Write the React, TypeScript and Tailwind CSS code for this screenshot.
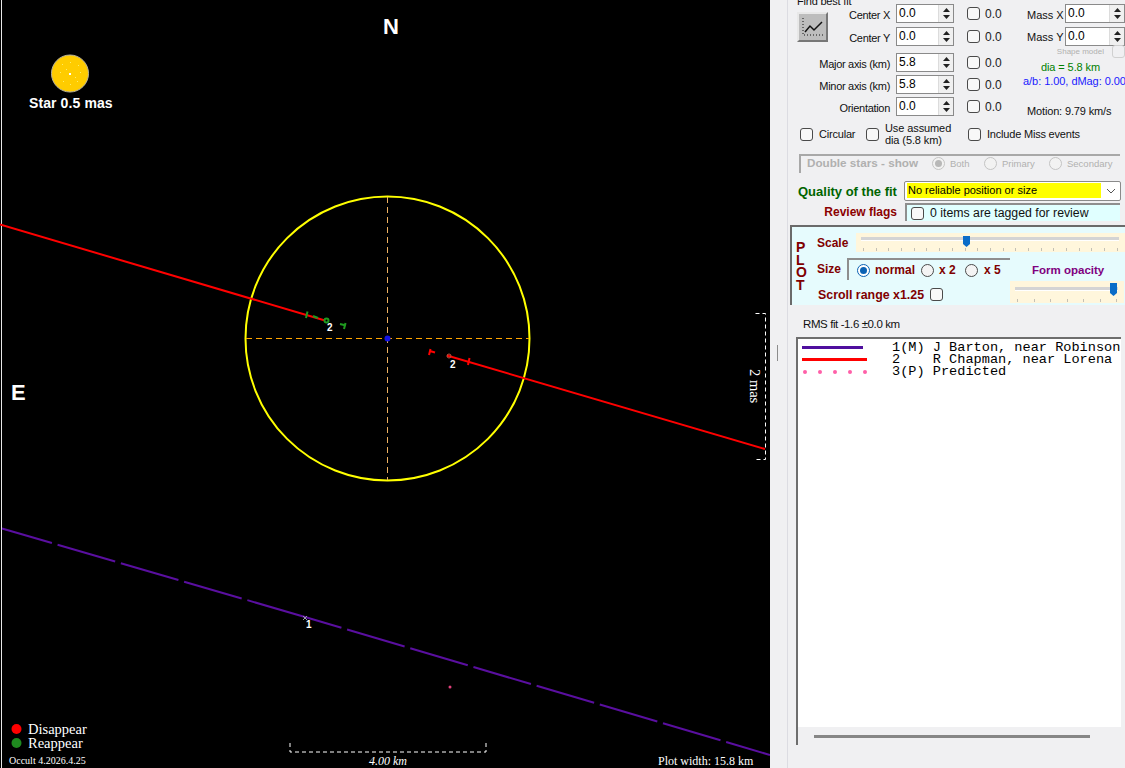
import React from 'react';

// small form controls used by the fit panel
const Check = ({ className = '' }: { className?: string }) => (
  <span className={`block w-[13px] h-[13px] shrink-0 rounded-[3px] border border-[#4a4a4a] bg-[#f8f8f8] ${className}`} />
);

const Spin = ({ value, className = 'w-[58px]' }: { value: string; className?: string }) => (
  <div className={`h-[19px] shrink-0 flex bg-white border border-[#8a8a8a] ${className}`}>
    <span className="flex-1 pl-[2px] text-[12px] leading-[16px] text-black">{value}</span>
    <span className="w-[15px] flex flex-col items-center justify-center gap-[3px] bg-[#f0f0f0] border-l border-[#dcdcdc]">
      <svg width="7" height="4" viewBox="0 0 7 4"><path d="M3.5 0 7 4H0z" fill="#222" /></svg>
      <svg width="7" height="4" viewBox="0 0 7 4"><path d="M0 0h7L3.5 4z" fill="#222" /></svg>
    </span>
  </div>
);

const FitRow = ({ label, value, className = '' }: { label: string; value: string; className?: string }) => (
  <div className={`flex items-center h-[19px] ${className}`}>
    <span className="flex-1 pr-[6px] pt-[3px] text-right whitespace-nowrap text-[11px] tracking-[-0.3px] text-[#111]">{label}</span>
    <Spin value={value} />
    <Check className="ml-[13px]" />
    <span className="ml-[5px] w-[38px] text-[12px] text-[#222]">0.0</span>
  </div>
);

const Radio = ({ on = false, disabled = false }: { on?: boolean; disabled?: boolean }) => (
  <span
    className={`flex items-center justify-center w-[13px] h-[13px] shrink-0 rounded-full border ${
      on && !disabled ? 'border-[#0a62b4] bg-white' : disabled ? 'border-[#c4c4c4] bg-[#f2f2f2]' : 'border-[#4a4a4a] bg-[#f4f4f4]'
    }`}
  >
    {on && <span className={`block w-[7px] h-[7px] rounded-full ${disabled ? 'bg-[#b8b8b8]' : 'bg-[#0a62b4]'}`} />}
  </span>
);

const Slider = ({ thumb, ticks, tall = false, className = '' }: { thumb: number; ticks: number; tall?: boolean; className?: string }) => (
  <div className={`relative bg-[#fff6dc] ${className}`}>
    <div className={`absolute left-[5px] right-[6px] h-[4px] bg-[#d4d4d4] border-b border-white ${tall ? 'top-[6px]' : 'top-[4px]'}`} />
    <svg className={`absolute ${tall ? 'top-[2px]' : 'top-[3px]'}`} style={{ left: thumb }} width="7" height={tall ? 13 : 11} viewBox={tall ? '0 0 7 13' : '0 0 7 11'}>
      <path d={tall ? 'M0 0h7v10l-3.500 3L0 10z' : 'M0 0h7v8l-3.500 3L0 8z'} fill="#0a6cc8" />
    </svg>
    <div className="absolute left-[7px] right-[7px] bottom-[1px] h-[3px] flex justify-between">
      {Array.from({ length: ticks }).map((_, i) => (
        <span key={i} className="block w-px h-[3px] bg-[#c4c0b4]" />
      ))}
    </div>
  </div>
);

const Plot = () => (
  <div className="w-[770px] h-[768px] shrink-0 bg-black">
    <svg width="770" height="768" viewBox="0 0 770 768" className="block">
      <rect x="1" y="0" width="1" height="768" fill="#e8e8e8" />

      {/* star */}
      <circle cx="70" cy="73.500" r="18.500" fill="#ffcc00" stroke="#b9b4a0" strokeWidth="1" />
      {[[62, 64], [70, 62], [78, 65], [60, 72], [80, 72], [63, 81], [70, 84], [77, 81], [66, 69], [75, 77]].map(([x, y]) => (
        <rect key={`${x}-${y}`} x={x} y={y} width="1" height="1" fill="#ffee66" />
      ))}
      <rect x="69" y="73" width="2" height="2" fill="#ffffff" />

      {/* asteroid outline */}
      <circle cx="387.500" cy="338.500" r="142" fill="none" stroke="#ffff00" strokeWidth="2" />
      <path d="M246 338.500H529" stroke="#ffa500" strokeWidth="1" strokeDasharray="6 4" />
      <path d="M387.500 197V480" stroke="#eeb060" strokeWidth="1" strokeDasharray="6 4" />
      <circle cx="387.500" cy="338.500" r="3" fill="#1414e6" />

      {/* chords */}
      <path d="M0 224.500 325 320.500M447 355.500 765 449" stroke="#ff0000" strokeWidth="2" fill="none" />
      <path d="M2 528.500 305 617" stroke="#5a0fa0" strokeWidth="2" strokeDasharray="60 5.900" strokeDashoffset="8" fill="none" />
      <path d="M305 617 770 755" stroke="#5a0fa0" strokeWidth="2" strokeDasharray="60 5.900" strokeDashoffset="22" fill="none" />

      {/* event markers */}
      <g stroke="#1f9a1f" strokeWidth="2" fill="none">
        <path d="M307.500 311.500 306 318" />
        <path d="M313 316l5 2" />
        <circle cx="326.500" cy="320.500" r="2" />
        <path d="M340 324l6 1.500M345.500 323 344 329" />
      </g>
      <g stroke="#ff0000" strokeWidth="2" fill="none">
        <path d="M430.500 349 429 355M430 351l5 1.500" />
        <path d="M469.500 358 468 365" />
      </g>
      <circle cx="449" cy="356" r="2" fill="none" stroke="#c8503c" strokeWidth="1" />
      <path d="M303 616l4 4M307 616l-4 4" stroke="#9a9aa8" strokeWidth="1" />
      <circle cx="450" cy="687" r="1.500" fill="#e0407a" />

      {/* scale and size brackets */}
      <path d="M290 743v9H486V743" fill="none" stroke="#fff" strokeWidth="1" strokeDasharray="4 3" />
      <path d="M755.500 313.500H765.500V459.500H755.500" fill="none" stroke="#fff" strokeWidth="1" strokeDasharray="4 3" />

      <circle cx="16.500" cy="729" r="5" fill="#ff0000" />
      <circle cx="16.500" cy="743" r="5" fill="#1f8a1f" />

      {/* labels */}
      <text x="383" y="34" className="fill-white font-['Liberation_Sans'] font-bold text-[22px]">N</text>
      <text x="11" y="400" className="fill-white font-['Liberation_Sans'] font-bold text-[22px]">E</text>
      <text x="29" y="108" className="fill-white font-['Liberation_Sans'] font-bold text-[14px] tracking-[0.1px]">Star 0.5 mas</text>
      <text x="327" y="331" className="fill-white font-['Liberation_Sans'] font-bold text-[10px]">2</text>
      <text x="450" y="368" className="fill-white font-['Liberation_Sans'] font-bold text-[10px]">2</text>
      <text x="306" y="628" className="fill-white font-['Liberation_Sans'] font-bold text-[10px]">1</text>
      <text x="28" y="734" className="fill-white font-['Liberation_Serif'] text-[14.500px]">Disappear</text>
      <text x="28" y="748" className="fill-white font-['Liberation_Serif'] text-[14.500px]">Reappear</text>
      <text x="9" y="764" className="fill-white font-['Liberation_Serif'] text-[10px]">Occult 4.2026.4.25</text>
      <text x="388" y="765" textAnchor="middle" className="fill-white font-['Liberation_Serif'] italic text-[12px]">4.00 km</text>
      <text x="658" y="765" className="fill-white font-['Liberation_Serif'] text-[12px]">Plot width: 15.8 km</text>
      <text x="0" y="0" transform="translate(750 369) rotate(90)" className="fill-white font-['Liberation_Serif'] text-[14.500px]">2 mas</text>
    </svg>
  </div>
);

const FitPanel = () => (
  <div className="flex h-[122px] pl-[9px] pt-[4px]">
    <div className="w-[226px]">
      <div className="flex">
        <div className="w-[31px] shrink-0 relative">
          <span className="absolute left-0 top-[-9px] whitespace-nowrap text-[11px] tracking-[-0.2px] leading-[12px] text-[#111]">Find best fit</span>
          <button className="mt-[8px] block w-[31px] h-[30px] bg-[#bdbdbd] border-2 border-t-[#e8e8e8] border-l-[#e8e8e8] border-r-[#777] border-b-[#777]">
            <svg width="27" height="26" viewBox="0 0 27 26" className="block">
              <path d="M4 4V21H24" fill="none" stroke="#111" strokeWidth="1" strokeDasharray="1 2" />
              <path d="M6 18l5-6 4 4 8-8" fill="none" stroke="#111" strokeWidth="1.500" />
            </svg>
          </button>
        </div>
        <div className="flex-1">
          <FitRow label="Center X" value="0.0" />
          <FitRow label="Center Y" value="0.0" className="mt-[4px]" />
        </div>
      </div>
      <FitRow label="Major axis (km)" value="5.8" className="mt-[7px]" />
      <FitRow label="Minor axis (km)" value="5.8" className="mt-[3px]" />
      <FitRow label="Orientation" value="0.0" className="mt-[3px]" />
    </div>

    <div className="flex-1 min-w-0 pl-[4px]">
      <div className="flex items-center h-[19px]">
        <span className="w-[41px] pt-[3px] text-[11px] text-[#111] whitespace-nowrap">Mass X</span>
        <Spin value="0.0" className="w-[60px]" />
      </div>
      <div className="flex items-center h-[19px] mt-[4px]">
        <span className="w-[41px] pt-[2px] text-[11px] text-[#111] whitespace-nowrap">Mass Y</span>
        <Spin value="0.0" className="w-[60px]" />
      </div>
      <div className="flex items-center h-[13px] -mt-[1px] justify-end">
        <span className="text-[8px] text-[#b0b0b0] whitespace-nowrap">Shape model</span>
        <span className="ml-[8px] w-[13px] h-[13px] rounded-[3px] border border-[#d0d0d0]" />
      </div>
      <div className="mt-[2px] ml-[14px] text-[11px] tracking-[-0.1px] leading-[14px] text-[#008000] whitespace-nowrap">dia = 5.8 km</div>
      <div className="-ml-[4px] text-[11px] tracking-[-0.05px] leading-[14px] text-[#1a1aff] whitespace-nowrap">a/b: 1.00, dMag: 0.00</div>
      <div className="mt-[16px] text-[11px] tracking-[-0.15px] leading-[14px] text-[#111] whitespace-nowrap">Motion: 9.79 km/s</div>
    </div>
  </div>
);

const legendText = `1(M) J Barton, near Robinson
2    R Chapman, near Lorena
3(P) Predicted`;

const LegendRows = () => (
  <div className="pt-[3px] flex">
    <div className="w-[94px] shrink-0 pl-[4px]">
      <div className="flex items-center h-[12px]"><span className="block w-[61px] h-[3px] -mt-[2px] bg-[#4f0f9e]" /></div>
      <div className="flex items-center h-[12px]"><span className="block w-[65px] h-[3px] -mt-[2px] bg-[#ff0000]" /></div>
      <div className="flex items-center h-[12px] pl-[1px] gap-[11px]">
        {[0, 1, 2, 3, 4].map((i) => (
          <span key={i} className="block w-[4px] h-[4px] rounded-full bg-[#ff5fa8]" />
        ))}
      </div>
    </div>
    <div className="font-['Liberation_Mono'] text-[13.600px] leading-[12px] text-black whitespace-pre">{legendText}</div>
  </div>
);

export default function App() {
  return (
    <div className="w-[1125px] h-[768px] flex overflow-hidden bg-[#f0f0f2] font-['Liberation_Sans',sans-serif]">
      <Plot />

      <div className="w-[355px] h-[768px] flex overflow-hidden">
        {/* splitter strip */}
        <div className="w-[18px] shrink-0 border-r border-[#dcdce2]">
          <div className="ml-[7px] mt-[345px] w-px h-[16px] bg-[#8c8c8c]" />
        </div>

        <div className="flex-1 min-w-0 flex flex-col">
          <FitPanel />

          {/* options */}
          <div className="flex items-center h-[24px] pl-[12px] text-[11px] tracking-[-0.2px] text-[#111]">
            <div className="w-[66px] flex items-center gap-[6px]"><Check />Circular</div>
            <div className="w-[102px] flex items-center gap-[6px]">
              <Check />
              <span className="leading-[12px] text-[11px] tracking-[-0.1px] whitespace-nowrap">Use assumed<br />dia (5.8 km)</span>
            </div>
            <div className="flex items-center gap-[6px]"><Check />Include Miss events</div>
          </div>

          {/* double stars */}
          <div className="mt-[8px] ml-[11px] w-[321px] h-[19px] pb-[3px] flex items-center border-t-2 border-l-2 border-[#a8a8a8] text-[#b0b0b0]">
            <span className="ml-[6px] w-[125px] font-bold text-[11.700px] whitespace-nowrap">Double stars - show</span>
            <span className="w-[52px] flex items-center gap-[5px] text-[9.500px]"><Radio on disabled /><span className="pt-[2px]">Both</span></span>
            <span className="w-[65px] flex items-center gap-[5px] text-[9.500px]"><Radio disabled /><span className="pt-[2px]">Primary</span></span>
            <span className="flex items-center gap-[5px] text-[9.500px]"><Radio disabled /><span className="pt-[2px]">Secondary</span></span>
          </div>

          {/* quality */}
          <div className="mt-[8px] ml-[10px] h-[19px] flex items-center">
            <span className="w-[106px] pt-[3px] font-bold text-[13px] text-[#006400] whitespace-nowrap">Quality of the fit</span>
            <div className="w-[217px] h-[20px] flex items-center bg-white border border-[#8a8a8a] rounded-[2px] pl-[2px]">
              <span className="w-[194px] h-[15px] bg-[#ffff00] text-[11px] leading-[14px] pl-[1px] text-black whitespace-nowrap">No reliable position or size</span>
              <svg width="10" height="6" viewBox="0 0 10 6" className="ml-[5px]"><path d="M1 1l4 4 4-4" fill="none" stroke="#555" /></svg>
            </div>
          </div>

          {/* review flags */}
          <div className="mt-[3px] h-[18px] flex items-center">
            <span className="w-[117px] pr-[8px] text-right font-bold text-[12px] text-[#8b0000] whitespace-nowrap">Review flags</span>
            <div className="w-[215px] h-[18px] flex items-center gap-[6px] pl-[4px] bg-[#e0ffff] border-t-2 border-l-2 border-[#8e8e8e] text-[12.300px] text-[#111]">
              <Check />0 items are tagged for review
            </div>
          </div>

          {/* plot settings */}
          <div className="mt-[4px] ml-[2px] h-[80px] flex bg-[#e6fbfd] border-t-2 border-l-2 border-[#6a6a6a]">
            <div className="w-[25px] shrink-0 pt-[14px] pl-[4px]">
              <div className="w-[10px] font-bold text-[14px] leading-[12.700px] text-[#800000]">P L O T</div>
            </div>
            <div className="flex-1 min-w-0 flex flex-col">
              <div className="mt-[6px] h-[19px] flex items-center">
                <span className="w-[39px] font-bold text-[12px] text-[#800000]">Scale</span>
                <Slider thumb={107} ticks={21} className="flex-1 h-[19px]" />
              </div>
              <div className="mt-[6px] h-[22px] flex items-center">
                <span className="w-[30px] font-bold text-[12px] text-[#800000]">Size</span>
                <div className="w-[163px] h-[22px] flex items-center pl-[8px] border-t-2 border-l-2 border-[#8e8e8e] font-bold text-[12px] text-[#800000]">
                  <Radio on />
                  <span className="ml-[5px] w-[46px]">normal</span>
                  <Radio />
                  <span className="ml-[5px] w-[26px]">x 2</span>
                  <Radio />
                  <span className="ml-[6px]">x 5</span>
                </div>
                <span className="ml-[22px] pt-[3px] font-bold text-[11.500px] text-[#800080] whitespace-nowrap">Form opacity</span>
              </div>
              <div className="mt-[1px] h-[22px] flex items-center">
                <span className="w-[112px] pl-[1px] pt-[6px] font-bold text-[12.400px] text-[#800000] whitespace-nowrap">Scroll range x1.25</span>
                <Check className="ml-[1px] mt-[5px]" />
                <Slider thumb={100} ticks={7} tall className="ml-[67px] w-[114px] h-[22px]" />
              </div>
            </div>
          </div>

          {/* rms */}
          <div className="mt-[12px] ml-[15px] h-[14px] text-[11.500px] tracking-[-0.4px] leading-[14px] text-[#111]">RMS fit -1.6 ±0.0 km</div>

          {/* event list */}
          <div className="mt-[6px] ml-[8px] w-[325px] h-[408px] flex flex-col bg-white border-t-2 border-l-2 border-[#6e6e6e] overflow-hidden">
            <div className="flex-1"><LegendRows /></div>
            <div className="h-[18px] bg-[#f0f0f2] pl-[16px] pt-[8px]">
              <div className="w-[276px] h-[3px] bg-[#868686]" />
            </div>
          </div>
        </div>
      </div>
    </div>
  );
}
